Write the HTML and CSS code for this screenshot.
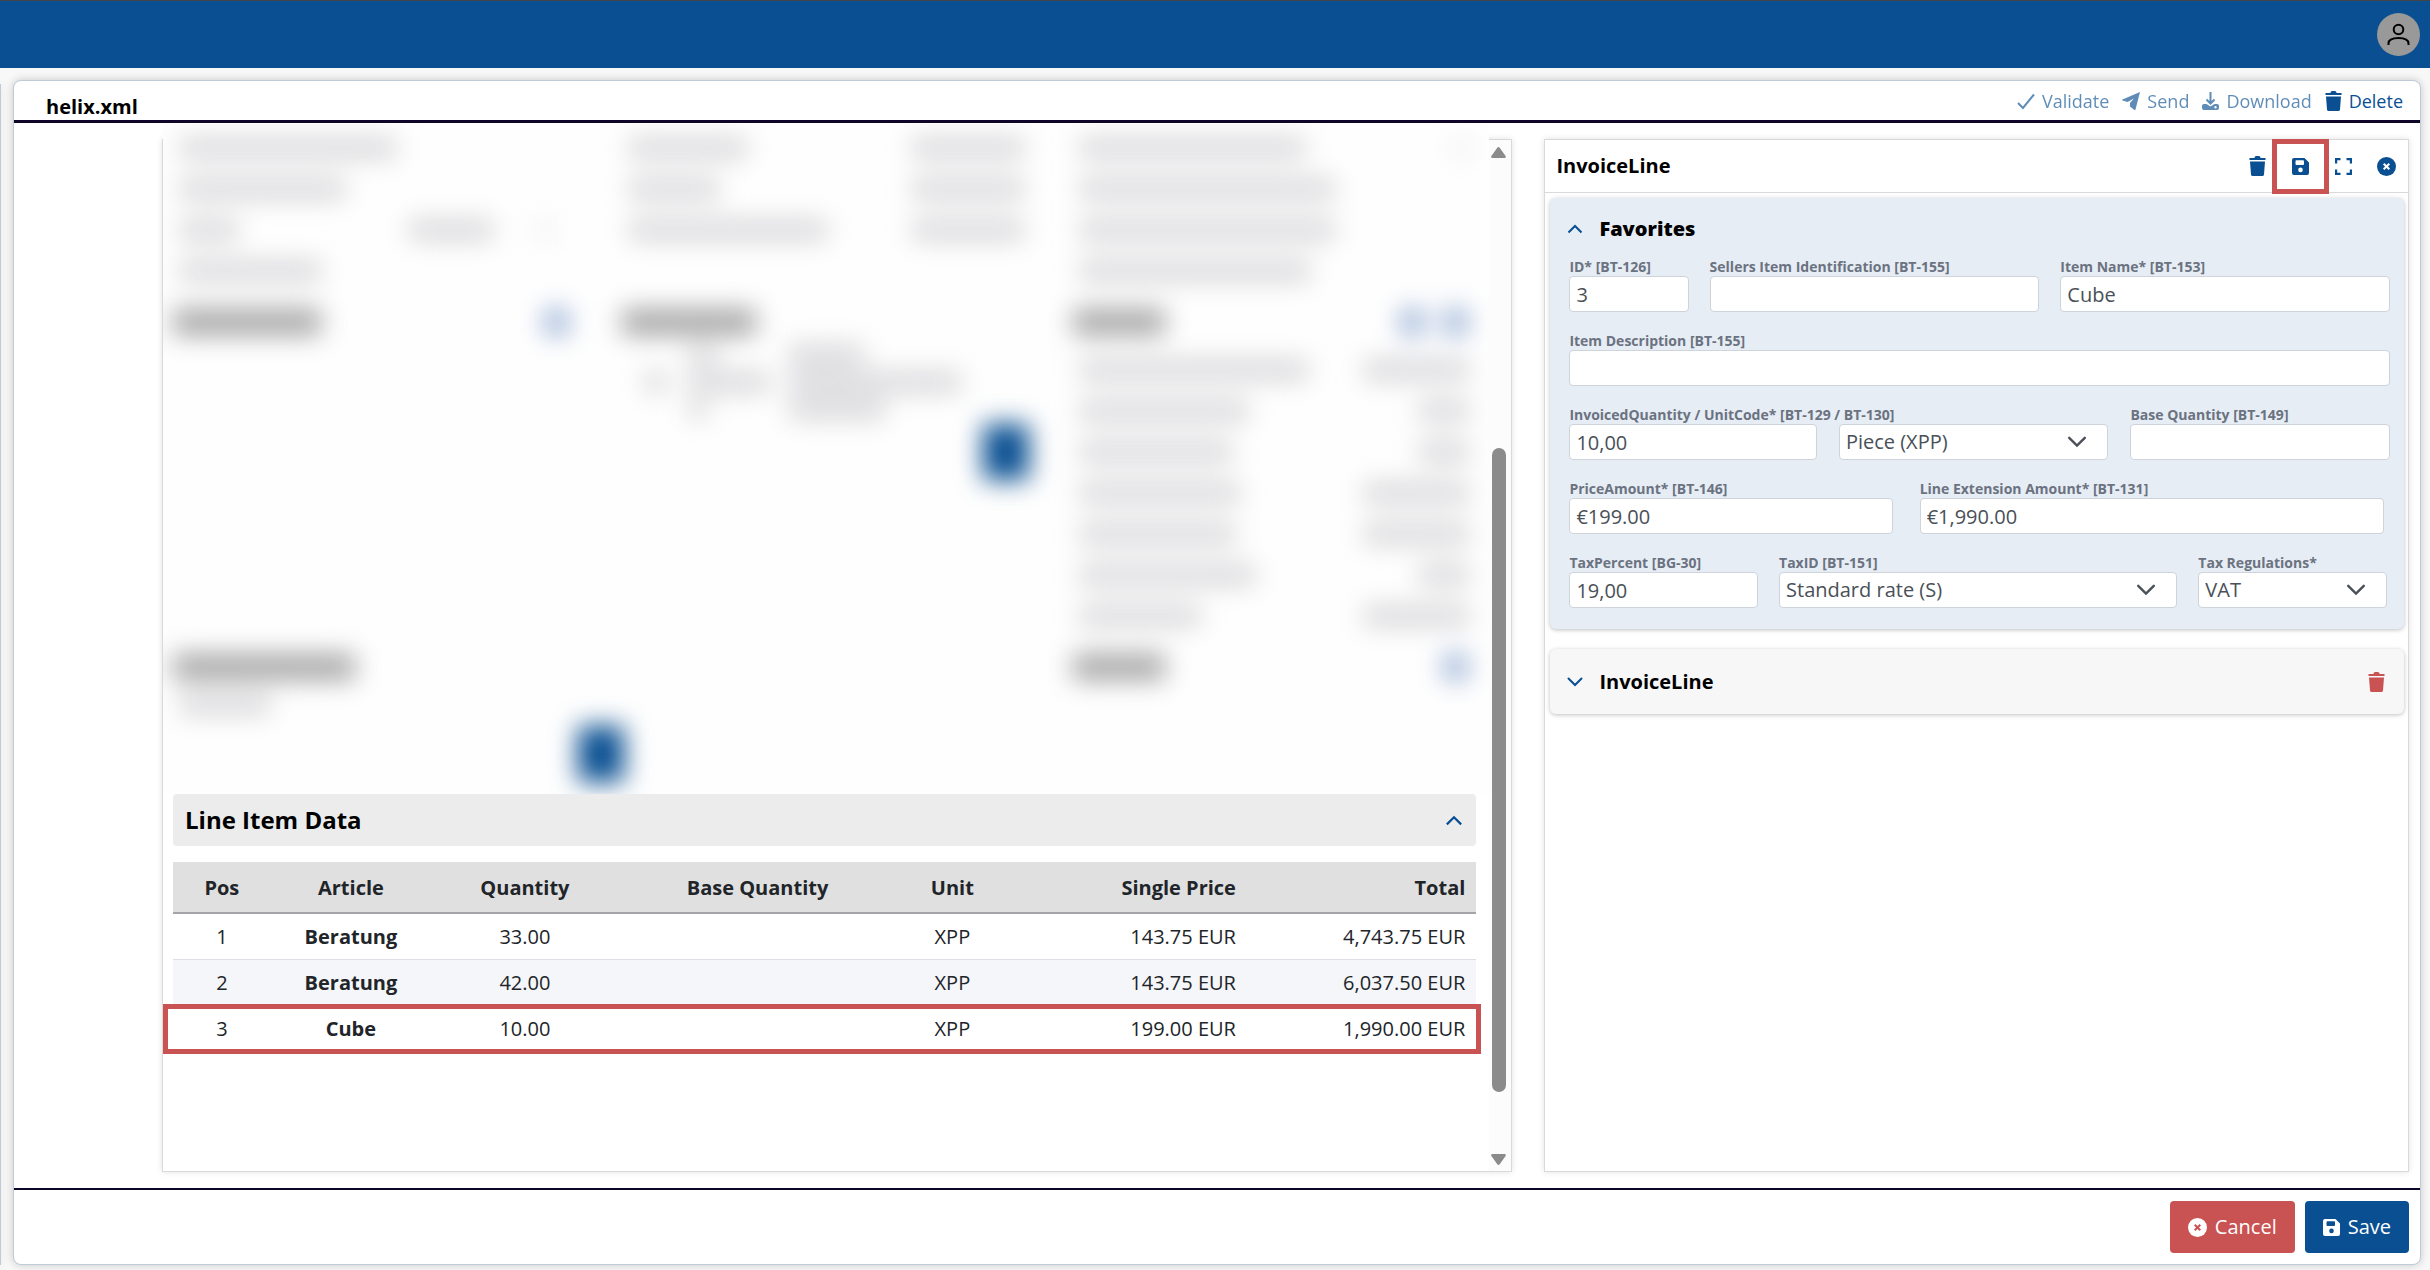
FILE: index.html
```html
<!DOCTYPE html>
<html lang="en">
<head>
<meta charset="utf-8">
<meta name="viewport" content="width=device-width, initial-scale=1">
<title>helix.xml</title>
<link rel="stylesheet" href="styles.css">
</head>
<body>
<svg class="sprite" aria-hidden="true">
  <symbol id="i-trash" viewBox="0 0 17 20"><path d="M.5 2H5.500C5.500.8 6.200 0 7.200 0H9.800C10.800 0 11.500.8 11.500 2H16.500V4H.5ZM1 5.500H16L15 18.500Q14.800 20 13.400 20H3.600Q2.200 20 2 18.500Z"/></symbol>
  <symbol id="i-save" viewBox="0 0 17 17"><path fill-rule="evenodd" d="M2 0H12.500L17 4.500V15Q17 17 15 17H2Q0 17 0 15V2Q0 0 2 0ZM4.500 2.200Q3.500 2.200 3.500 3.200V6Q3.500 7 4.500 7H11Q12 7 12 6V3.200Q12 2.200 11 2.200ZM8.500 9.600A2.300 2.300 0 1 0 8.500 14.200A2.300 2.300 0 1 0 8.500 9.600Z"/></symbol>
  <symbol id="i-expand" viewBox="0 0 17 17"><path fill="none" stroke="currentColor" stroke-width="2.200" d="M1.100 5.500V1.100H5.500M11.500 1.100H15.900V5.500M15.900 11.500V15.900H11.500M5.500 15.900H1.100V11.500"/></symbol>
  <symbol id="i-close" viewBox="0 0 19 19"><circle cx="9.500" cy="9.500" r="9.500"/><path class="cut" d="M6.700 6.700L12.300 12.300M12.300 6.700L6.700 12.300"/></symbol>
  <symbol id="i-up" viewBox="0 0 16 10"><path fill="none" stroke="currentColor" stroke-width="2" d="M1.500 8.500L8 2L14.500 8.500"/></symbol>
  <symbol id="i-down" viewBox="0 0 16 10"><path fill="none" stroke="currentColor" stroke-width="2" stroke-linecap="round" d="M1.500 1.500L8 8L14.500 1.500"/></symbol>
</svg>

<header class="topbar">
  <button class="avatar" type="button" aria-label="Account">
    <svg class="outline" width="23" height="23" viewBox="0 0 23 23"><circle cx="11.500" cy="6.500" r="4.800"/><path d="M1.500 22V20.500C1.500 16.500 5 15 11.500 15S21.500 16.500 21.500 20.500V22"/></svg>
  </button>
</header>

<main class="workspace">
  <aside class="side-edge"></aside>
  <section class="card">
    <header class="card-head">
      <h1 class="file-name">helix.xml</h1>
      <div class="actions">
        <button class="action" type="button" disabled><svg class="outline" width="18" height="18" viewBox="0 0 18 18"><path d="M1 11L6 16L17 2.500"/></svg>Validate</button>
        <button class="action" type="button" disabled><svg width="18" height="18" viewBox="0 0 18 18"><path fill-rule="evenodd" d="M18 0L13.500 17.500Q13 18.500 12 17.700L8 14.500V11L12 6.500L5.500 10L.5 8.500Q-.5 8 .5 7.500Z"/></svg>Send</button>
        <button class="action" type="button" disabled><svg width="17" height="18" viewBox="0 0 17 18"><path fill="none" stroke="currentColor" stroke-width="2" d="M8.500 0V11M4.500 7.500L8.500 11.500L12.500 7.500"/><path fill-rule="evenodd" d="M2 12H4.500L8.500 14.500L12.500 12H15Q17 12 17 14V16Q17 18 15 18H2Q0 18 0 16V14Q0 12 2 12ZM13.500 14A1.200 1.200 0 1 0 13.500 16.400A1.200 1.200 0 1 0 13.500 14Z"/></svg>Download</button>
        <button class="action" type="button"><svg width="17" height="20"><use href="#i-trash"/></svg>Delete</button>
      </div>
    </header>

    <div class="content">
      <section class="preview">
        <div class="sheet">
          <div class="masked" aria-hidden="true">
            <div class="blur">
              <div class="cols upper">
                <div class="col">
                  <div class="line"><i style="width:216px"></i></div>
                  <div class="line"><i style="width:165px"></i></div>
                  <div class="line"><i style="width:58px"></i><i class="push" style="width:84px"></i><i class="faint" style="width:16px"></i></div>
                  <div class="line"><i style="width:141px"></i></div>
                  <div class="heading"><b style="width:148px"></b><span></span></div>
                </div>
                <div class="col">
                  <div class="line"><i style="width:118px"></i><i class="push" style="width:112px"></i></div>
                  <div class="line"><i style="width:90px"></i><i class="push" style="width:112px"></i></div>
                  <div class="line"><i style="width:198px"></i><i class="push" style="width:112px"></i></div>
                  <div class="line"></div>
                  <div class="heading tight"><b style="width:134px"></b></div>
                  <div class="small-grid">
                    <i class="none"></i><i style="width:28px"></i><i style="width:75px"></i>
                    <i style="width:22px"></i><i style="width:80px"></i><i style="width:172px"></i>
                    <i class="none"></i><i style="width:18px"></i><i style="width:96px"></i>
                  </div>
                  <div class="blue-box inset"></div>
                </div>
                <div class="col">
                  <div class="line"><i style="width:225px"></i><i class="push faint" style="width:16px"></i></div>
                  <div class="line"><i style="width:255px"></i></div>
                  <div class="line"><i style="width:255px"></i></div>
                  <div class="line"><i style="width:230px"></i></div>
                  <div class="heading"><b style="width:92px"></b><span></span><span></span></div>
                  <div class="line"><i style="width:228px"></i><i class="push" style="width:105px"></i></div>
                  <div class="line"><i style="width:168px"></i><i class="push" style="width:50px"></i></div>
                  <div class="line"><i style="width:152px"></i><i class="push" style="width:50px"></i></div>
                  <div class="line"><i style="width:160px"></i><i class="push" style="width:105px"></i></div>
                  <div class="line"><i style="width:155px"></i><i class="push" style="width:105px"></i></div>
                  <div class="line"><i style="width:175px"></i><i class="push" style="width:50px"></i></div>
                  <div class="line"><i style="width:120px"></i><i class="push" style="width:105px"></i></div>
                </div>
              </div>
              <div class="cols">
                <div class="col">
                  <div class="heading"><b style="width:182px"></b></div>
                  <div class="line short"><i style="width:90px"></i></div>
                  <div class="blue-box"></div>
                </div>
                <div class="col"></div>
                <div class="col">
                  <div class="heading"><b style="width:92px"></b><span></span></div>
                </div>
              </div>
            </div>
          </div>

          <div class="items">
            <button class="items-head" type="button" aria-expanded="true">Line Item Data<svg width="18" height="11"><use href="#i-up"/></svg></button>
            <table class="items-table">
              <colgroup><col class="c-pos"><col class="c-article"><col class="c-qty"><col class="c-base"><col class="c-unit"><col class="c-price"><col class="c-total"></colgroup>
              <thead>
                <tr><th>Pos</th><th>Article</th><th>Quantity</th><th>Base Quantity</th><th>Unit</th><th class="num">Single Price</th><th class="num">Total</th></tr>
              </thead>
              <tbody>
                <tr><td>1</td><td class="name">Beratung</td><td>33.00</td><td></td><td>XPP</td><td class="num">143.75 EUR</td><td class="num">4,743.75 EUR</td></tr>
                <tr><td>2</td><td class="name">Beratung</td><td>42.00</td><td></td><td>XPP</td><td class="num">143.75 EUR</td><td class="num">6,037.50 EUR</td></tr>
                <tr class="marked"><td>3</td><td class="name">Cube</td><td>10.00</td><td></td><td>XPP</td><td class="num">199.00 EUR</td><td class="num">1,990.00 EUR</td></tr>
              </tbody>
            </table>
          </div>
        </div>
        <div class="scrollbar" aria-hidden="true">
          <svg width="15" height="11" viewBox="0 0 15 11"><path d="M6.300.8Q7.500-.6 8.700.8L14.600 9Q15.300 11 13.500 11H1.500Q-.3 11 .4 9Z"/></svg>
          <div class="track"><div class="thumb"></div></div>
          <svg width="15" height="11" viewBox="0 0 15 11"><path d="M6.300 10.200Q7.500 11.600 8.700 10.200L14.600 2Q15.300 0 13.500 0H1.500Q-.3 0 .4 2Z"/></svg>
        </div>
      </section>

      <section class="editor">
        <header class="editor-head">
          <h2 class="editor-title">InvoiceLine</h2>
          <button class="tool" type="button" aria-label="Delete line"><svg width="17" height="20"><use href="#i-trash"/></svg></button>
          <button class="tool marked-tool" type="button" aria-label="Save line"><svg width="17" height="17"><use href="#i-save"/></svg></button>
          <button class="tool" type="button" aria-label="Full screen"><svg width="17" height="17"><use href="#i-expand"/></svg></button>
          <button class="tool" type="button" aria-label="Close"><svg width="19" height="19"><use href="#i-close"/></svg></button>
        </header>

        <form class="favorites">
          <h3 class="group-title favorites-title"><svg width="16" height="10"><use href="#i-up"/></svg>Favorites</h3>
          <div class="row row-id">
            <div class="field"><label for="f-id">ID* [BT-126]</label><input id="f-id" type="text" value="3"></div>
            <div class="field"><label for="f-seller">Sellers Item Identification [BT-155]</label><input id="f-seller" type="text"></div>
            <div class="field"><label for="f-name">Item Name* [BT-153]</label><input id="f-name" type="text" value="Cube"></div>
          </div>
          <div class="row">
            <div class="field"><label for="f-desc">Item Description [BT-155]</label><input id="f-desc" type="text"></div>
          </div>
          <div class="row row-qty">
            <div class="field"><label for="f-qty">InvoicedQuantity / UnitCode* [BT-129 / BT-130]</label><input id="f-qty" type="text" value="10,00"></div>
            <div class="field"><div class="pick"><select id="f-unit" aria-label="UnitCode"><option>Piece (XPP)</option></select><svg width="20" height="12"><use href="#i-down"/></svg></div></div>
            <div class="field"><label for="f-base">Base Quantity [BT-149]</label><input id="f-base" type="text"></div>
          </div>
          <div class="row row-amount">
            <div class="field"><label for="f-price">PriceAmount* [BT-146]</label><input id="f-price" type="text" value="€199.00"></div>
            <div class="field"><label for="f-ext">Line Extension Amount* [BT-131]</label><input id="f-ext" type="text" value="€1,990.00"></div>
          </div>
          <div class="row row-tax">
            <div class="field"><label for="f-pct">TaxPercent [BG-30]</label><input id="f-pct" type="text" value="19,00"></div>
            <div class="field"><label for="f-taxid">TaxID [BT-151]</label><div class="pick"><select id="f-taxid"><option>Standard rate (S)</option></select><svg width="20" height="12"><use href="#i-down"/></svg></div></div>
            <div class="field"><label for="f-reg">Tax Regulations*</label><div class="pick"><select id="f-reg"><option>VAT</option></select><svg width="20" height="12"><use href="#i-down"/></svg></div></div>
          </div>
        </form>

        <div class="line-group">
          <h3 class="group-title"><svg width="16" height="10"><use href="#i-down"/></svg>InvoiceLine</h3>
          <button class="remove" type="button" aria-label="Remove InvoiceLine"><svg width="17" height="20"><use href="#i-trash"/></svg></button>
        </div>
      </section>
    </div>

    <footer class="card-foot">
      <button class="btn btn-cancel" type="button"><svg width="19" height="19"><use href="#i-close"/></svg>Cancel</button>
      <button class="btn btn-save" type="button"><svg width="17" height="17"><use href="#i-save"/></svg>Save</button>
    </footer>
  </section>
</main>
</body>
</html>
```
FILE: styles.css
```css
* { box-sizing: border-box; }

:root {
  --blue: #094f91;
  --red: #c95252;
  --line: #d9d9d9;
}

body {
  margin: 0;
  min-height: 100vh;
  display: flex;
  flex-direction: column;
  background: #f8f8f8;
  color: #212529;
  font: 20px/28px "Open Sans", "Noto Sans", sans-serif;
}

button, input, select { font: inherit; color: inherit; }
button { border: 0; padding: 0; background: none; cursor: pointer; }
h1, h2, h3 { margin: 0; }
svg { fill: currentColor; flex: none; display: block; }
.outline { fill: none; stroke: currentColor; stroke-width: 2; }
.sprite { width: 0; height: 0; position: absolute; }
.cut { stroke: var(--cut, #fff); stroke-width: 2; fill: none; }

/* top bar */
.topbar {
  height: 68px;
  padding-right: 10px;
  display: flex;
  align-items: center;
  justify-content: flex-end;
  background: var(--blue);
  border-top: 1px solid #444;
}
.avatar {
  width: 43px;
  height: 43px;
  border-radius: 50%;
  background: #999;
  color: #000;
  display: grid;
  place-items: center;
}

/* main card */
.workspace {
  flex: 1;
  display: flex;
  gap: 12px;
  padding: 12px 9px 5px 0;
}
.side-edge {
  width: 1px;
  margin-top: 4px;
  background: #c0cad6;
  box-shadow: 0 0 8px rgba(0, 0, 0, .25);
}
.card {
  flex: 1;
  min-width: 0;
  display: flex;
  flex-direction: column;
  background: #fff;
  border: 1px solid #bfcbd6;
  border-radius: 8px;
  box-shadow: 0 0 8px rgba(0, 0, 0, .2);
}
.card-head {
  height: 42px;
  padding: 0 17px 0 32px;
  display: flex;
  justify-content: space-between;
  align-items: center;
  border-bottom: 3px solid #0d0628;
}
.file-name {
  align-self: flex-end;
  color: #000;
  font-size: 20px;
  line-height: 26px;
  font-weight: 700;
}
.actions { display: flex; gap: 13px; }
.action {
  display: flex;
  align-items: center;
  gap: 7px;
  color: var(--blue);
  font-size: 18px;
}
.action:disabled { opacity: .65; }

.content {
  flex: 1;
  display: grid;
  grid-template-columns: minmax(0, 1351fr) minmax(0, 865fr);
  gap: 32px;
  padding: 16px 11px 16px 148px;
}
.preview, .editor {
  border: 1px solid var(--line);
  box-shadow: 0 0 6px rgba(0, 0, 0, .12);
}

/* document preview */
.preview {
  display: grid;
  grid-template-columns: minmax(0, 1fr) 22px;
}
.masked {
  margin-top: -16px;
  height: 670px;
  overflow: hidden;
  background: #fefefe;
}
.blur {
  padding: 3px 13px 0 10px;
  filter: blur(13px);
}
.cols {
  display: grid;
  grid-template-columns: 449fr 451fr 404fr;
}
.line {
  height: 41px;
  padding: 0 7px;
  display: flex;
  align-items: center;
}
.line.short { height: 20px; }
.line i, .small-grid i {
  height: 20px;
  background: #d6d6d9;
}
.line .push { margin-left: auto; margin-right: 44px; }
.line .push:last-child { margin-right: 42px; }
.col:last-child .line .push:last-child { margin-right: 0; }
.line .faint { background: #efefef; margin-right: 62px; }
.heading {
  height: 58px;
  padding: 18px 9px 0 0;
  display: flex;
  gap: 20px;
}
.heading.tight { height: 50px; }
.heading b { height: 26px; margin-right: auto; background: #a4a4a4; }
.heading span { width: 23px; height: 26px; background: #94add4; }
.upper .col:first-child .heading { padding-right: 54px; }
.small-grid {
  display: grid;
  grid-template-columns: 44px 100px auto;
  grid-auto-rows: 27px;
  align-items: center;
  padding-left: 23px;
}
.small-grid .none { background: none; }
.blue-box {
  width: 46px;
  height: 56px;
  margin: 12px -2px 0 auto;
  background: var(--blue);
}
.blue-box.inset { margin: 2px 44px 0 auto; }

.items { padding: 0 13px 0 10px; }
.items-head {
  width: 100%;
  height: 52px;
  padding: 0 13px 0 12px;
  display: flex;
  align-items: center;
  justify-content: space-between;
  background: #ececec;
  border-radius: 4px;
  color: #000;
  font-size: 24px;
  font-weight: 700;
}
.items-head svg { color: var(--blue); }
.items-table {
  width: 100%;
  margin-top: 16px;
  table-layout: fixed;
  border-collapse: separate;
  border-spacing: 0;
  text-align: center;
}
.c-pos { width: 7.500%; }
.c-article { width: 12.300%; }
.c-qty { width: 14.400%; }
.c-base { width: 21.300%; }
.c-unit { width: 8.600%; }
.c-price { width: 18.300%; }
.c-total { width: 17.600%; }
.items-table th {
  height: 52px;
  padding: 2px 11px 0;
  background: #e0e0e0;
  border-bottom: 2px solid #a3a5a8;
  font-weight: 700;
}
.items-table td {
  height: 46px;
  padding: 0 11px;
  border-bottom: 1px solid #dcdfe6;
}
.items-table .name { font-weight: 700; }
.items-table .num { text-align: right; }
.items-table tr:nth-child(even) td { background: #f5f6f9; }
.items-table .marked { position: relative; }
.items-table .marked td { border-bottom: 0; }
.items-table .marked::after {
  content: "";
  position: absolute;
  inset: -2px -5px -2px -10px;
  border: 5px solid var(--red);
}

.scrollbar {
  display: flex;
  flex-direction: column;
  align-items: center;
  gap: 2px;
  padding: 7px 3px 6px 0;
  background: #fcfcfc;
  color: #8b8b8b;
}
.track {
  flex: 1;
  width: 14px;
  display: grid;
  grid-template-rows: 287fr 643fr 60fr;
}
.thumb { grid-row: 2; border-radius: 7px; background: #8b8b8b; }

/* line editor */
.editor { color: #000; }
.editor-head {
  height: 53px;
  display: flex;
  align-items: center;
  padding-left: 11px;
  border-bottom: 1px solid var(--line);
}
.editor-title { flex: 1; font-size: 20px; font-weight: 700; }
.tool {
  width: 43px;
  height: 43px;
  display: grid;
  place-items: center;
  color: var(--blue);
}
.marked-tool { position: relative; }
.marked-tool::after {
  content: "";
  position: absolute;
  inset: -6px -7px;
  border: 5px solid var(--red);
}
.favorites, .line-group {
  margin: 5px 4px 0 5px;
  border-radius: 6px;
  box-shadow: 0 1px 4px rgba(0, 0, 0, .25);
}
.favorites {
  padding: 14px 14px 21px 19px;
  display: grid;
  gap: 20px;
  background: #e6edf5;
}
.group-title {
  display: flex;
  align-items: center;
  gap: 16px;
  font-size: 20px;
  font-weight: 700;
  line-height: 34px;
}
.favorites-title { height: 26px; padding-top: 8px; margin-left: -2px; font-weight: 800; }
.group-title svg { color: var(--blue); }
.row { display: grid; gap: 21px; align-items: end; }
.row-id { grid-template-columns: 119fr 329fr 329fr; }
.row-qty { grid-template-columns: 247fr 269fr 259fr; gap: 22px; }
.row-amount { grid-template-columns: 323fr 464fr; gap: 27px; padding-right: 6px; }
.row-tax { grid-template-columns: 189fr 399fr 189fr; padding-right: 3px; }
.field { min-width: 0; display: flex; flex-direction: column; }
.field label {
  color: #6b7280;
  font-size: 14px;
  line-height: 18px;
  font-weight: 700;
  white-space: nowrap;
}
.field input, .field select {
  width: 100%;
  height: 36px;
  padding: 0 6px;
  background: #fff;
  border: 1px solid #ced4da;
  border-radius: 4px;
  color: #495057;
  appearance: none;
}
.pick { display: grid; align-items: center; }
.pick > * { grid-area: 1 / 1; }
.pick svg { justify-self: end; margin-right: 21px; color: #495057; pointer-events: none; }
.line-group {
  height: 65px;
  margin-top: 20px;
  padding: 0 19px 0 17px;
  display: flex;
  align-items: center;
  justify-content: space-between;
  background: #f7f7f7;
}
.remove { color: var(--red); }

/* footer */
.card-foot {
  padding: 11px;
  display: flex;
  justify-content: flex-end;
  gap: 10px;
  border-top: 2px solid #0d0628;
}
.btn {
  height: 52px;
  padding: 0 18px;
  display: flex;
  align-items: center;
  gap: 8px;
  border-radius: 4px;
  color: #fff;
}
.btn-cancel { background: var(--red); --cut: var(--red); }
.btn-save { background: var(--blue); }
```
